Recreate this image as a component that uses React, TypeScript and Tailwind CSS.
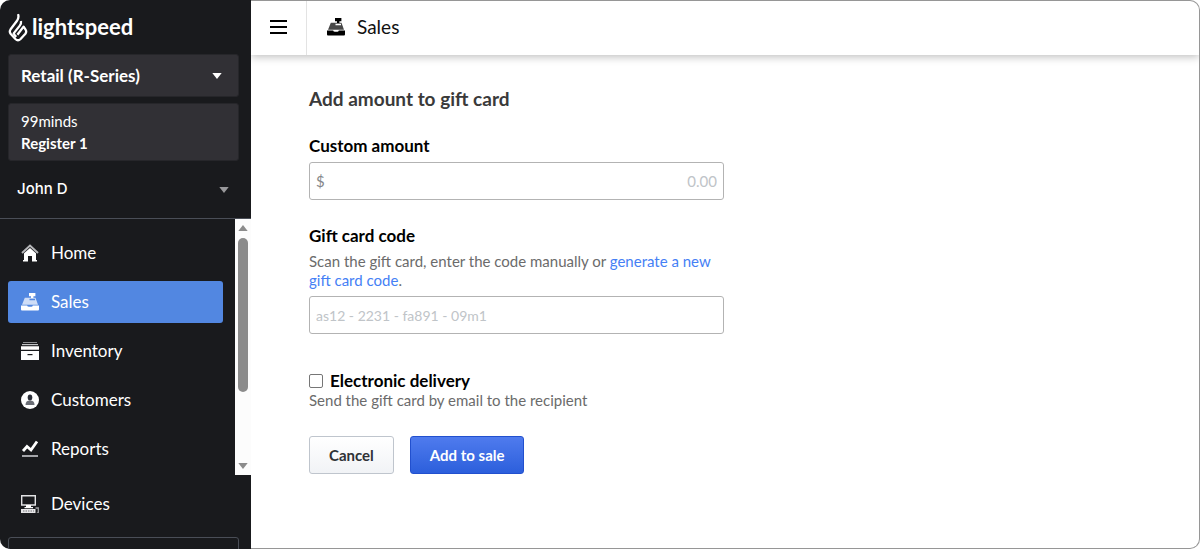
import type { ReactNode } from "react";

type IconProps = { className?: string };

function HomeIcon() {
  return (
    <svg className="size-[18px]" viewBox="0 0 18 18" fill="none" aria-hidden="true">
      <path d="M1 9 9 1.600 17 9" stroke="#b5b6b9" strokeWidth="2" />
      <path d="M3 9.300 9 3.900l6 5.400V16h1v1.500h-5V12H7v5.500H2V16h1z" fill="#fff" />
    </svg>
  );
}

function RegisterIcon({ className }: IconProps) {
  return (
    <svg className={className} viewBox="0 0 18 18" fill="currentColor" aria-hidden="true">
      <path d="M8 0h6.400v3.200h-2V5H10V3.200H8z" />
      <path
        fillRule="evenodd"
        d="M3.800 4.800h10.700l2.500 6.900H1zM8.500 5.800v1.400H14V5.800z"
        opacity="0.72"
      />
      <path d="M0 12.600h6.200c.2.8.8 1.200 1.400 1.200h2.800c.7 0 1.200-.4 1.400-1.200H18v3.600c0 .8-.5 1.300-1.300 1.300H1.300C.5 17.500 0 17 0 16.200z" />
    </svg>
  );
}

function InventoryIcon() {
  return (
    <svg className="size-[18px]" viewBox="0 0 18 18" aria-hidden="true">
      <path d="M2 0h14v1H2z" fill="#8f9093" />
      <path d="M1 2h16v1.200H1z" fill="#c5c6c8" />
      <path d="M0 4.200h18v3.600H0zM0 9h18v9H0z" fill="#fff" />
      <path d="M6.500 12h5v1.200h-5z" fill="#191a1d" />
    </svg>
  );
}

function CustomersIcon() {
  return (
    <svg className="size-[18px]" viewBox="0 0 18 18" aria-hidden="true">
      <circle cx="9" cy="9" r="9" fill="#fff" />
      <path d="M4.500 14c0-3.200 1.500-4.500 4.500-4.500s4.500 1.300 4.500 4.500z" fill="#6a6d75" />
      <ellipse cx="9" cy="6.500" rx="2.300" ry="3" fill="#2b2e38" />
    </svg>
  );
}

function ReportsIcon() {
  return (
    <svg className="size-[18px]" viewBox="0 0 18 18" fill="none" aria-hidden="true">
      <path d="m2 11 4-4.500 4 3.500 6-8.500" stroke="#fff" strokeWidth="2.800" />
      <path d="M1 16h16" stroke="#b5b6b9" strokeWidth="1.800" />
    </svg>
  );
}

function DevicesIcon() {
  return (
    <svg className="size-[18px]" viewBox="0 0 18 18" fill="none" aria-hidden="true">
      <path d="M.7.700h13.600v9.300H.700z" stroke="#e2e2e4" strokeWidth="1.400" />
      <path d="M5 10h5v2h2v1.200H3.500V12H5z" fill="#fff" />
      <path d="M0 14h14.500v4H0z" fill="#e6e6e8" />
      <path d="M2 16h11" stroke="#55565a" strokeWidth=".8" strokeDasharray="1.500 1" />
      <path d="M14.500 13h2.800v5h-1.500" stroke="#9b9c9f" strokeWidth="1.300" />
    </svg>
  );
}

function FlameLogo() {
  return (
    <svg className="h-[29px] w-5" viewBox="0 0 20 29" fill="none" stroke="#fff" aria-hidden="true">
      <path
        d="M10 1.200c1 2.600.4 4.600-1 6.600L2.600 16.300q-1.600 2.300 0 4.500L7.400 26q2.600 2.500 5.200 0l4.800-5.200q1.600-2.200 0-4.500L15.600 13.600 9.400 21.800"
        strokeWidth="2.300"
        strokeLinejoin="round"
      />
      <path d="M13 8c.3 1.700-.1 3.200-1.200 4.600L5.700 20.400q.6 1.600 2.600 3.400" strokeWidth="2.300" strokeLinejoin="round" />
    </svg>
  );
}

function Caret({ className }: IconProps) {
  return (
    <svg className={className} viewBox="0 0 10 6" fill="currentColor" aria-hidden="true">
      <path d="M.3 0h9.400L5 6z" />
    </svg>
  );
}

const navItems: { label: string; icon: ReactNode; active?: boolean }[] = [
  { label: "Home", icon: <HomeIcon /> },
  { label: "Sales", icon: <RegisterIcon className="size-[18px]" />, active: true },
  { label: "Inventory", icon: <InventoryIcon /> },
  { label: "Customers", icon: <CustomersIcon /> },
  { label: "Reports", icon: <ReportsIcon /> },
];

function Sidebar() {
  return (
    <aside className="flex w-[251px] shrink-0 flex-col overflow-hidden rounded-l-[10px] bg-[#191a1d] text-white">
      <div className="flex flex-col px-2 pt-3">
        <a href="#" className="flex h-[30px] items-center gap-1">
          <FlameLogo />
          <span className="text-[22px] leading-7 font-bold">lightspeed</span>
        </a>
        <div className="mt-3 mr-1 flex flex-col gap-[6px]">
          <button className="flex h-[43px] items-center justify-between rounded-[3px] border border-[#26262a] bg-[#313035] pr-4 pl-3 text-[17px] font-bold">
            Retail (R-Series)
            <Caret className="h-[6px] w-[10px]" />
          </button>
          <div className="rounded-[3px] border border-[#26262a] bg-[#313035] px-3 py-[6px] text-[15px] leading-[22px]">
            <p>99minds</p>
            <p className="font-bold">Register 1</p>
          </div>
        </div>
        <button className="flex h-[57px] items-center justify-between pr-[14px] pl-[9px] font-['Inter','Lato',sans-serif] text-[15px] font-medium">
          John D
          <Caret className="h-[6px] w-[10px] text-[#98989b]" />
        </button>
      </div>

      <div className="flex shrink-0 border-t border-[#4a4e57]">
        <nav className="flex flex-1 flex-col gap-[7px] pt-[13px] pr-3 pb-[5px] pl-2">
          {navItems.map((item) => (
            <a
              key={item.label}
              href="#"
              className={
                item.active
                  ? "flex h-[42px] items-center gap-3 rounded-[3px] bg-[#5287e1] px-[13px] text-[17px]"
                  : "flex h-[42px] items-center gap-3 rounded-[3px] px-[13px] text-[17px]"
              }
            >
              {item.icon}
              {item.label}
            </a>
          ))}
        </nav>
        <div className="flex w-4 flex-col items-center bg-[#fcfcfc] py-[6px] text-[#8b8b8b]">
          <Caret className="h-[6px] w-[10px] rotate-180" />
          <div className="mt-[7px] h-[154px] w-[10px] rounded-full bg-[#8b8b8b]" />
          <Caret className="mt-auto h-[6px] w-[10px]" />
        </div>
      </div>

      <a href="#" className="mx-2 mt-2 flex h-[42px] shrink-0 items-center gap-3 px-[13px] text-[17px]">
        <DevicesIcon />
        Devices
      </a>
      <div className="mt-3 mr-3 ml-2 h-12 shrink-0 rounded-[3px] border border-[#4a4e57]" />
    </aside>
  );
}

function Header() {
  return (
    <header className="flex h-[54px] shrink-0 items-stretch shadow-[0_2px_8px_rgba(0,0,0,0.25)]">
      <button aria-label="Menu" className="flex w-14 items-center justify-center border-r border-[#e3e3e3] pb-[2px]">
        <svg className="h-[14px] w-[17px]" viewBox="0 0 17 14" stroke="#000" strokeWidth="2" aria-hidden="true">
          <path d="M0 1h17M0 7h17M0 13h17" />
        </svg>
      </button>
      <h1 className="flex items-center gap-3 pb-[2px] pl-5 text-[19px] text-[#111]">
        <RegisterIcon className="size-[18px] text-black" />
        Sales
      </h1>
    </header>
  );
}

function GiftCardForm() {
  return (
    <form className="flex max-w-[415px] flex-col">
      <h2 className="text-[19px] leading-6 font-bold text-[#3a3a3a]">Add amount to gift card</h2>

      <label htmlFor="amount" className="mt-[23px] text-[17px] leading-6 font-bold">
        Custom amount
      </label>
      <div className="mt-1 flex h-[38px] items-center rounded-[3px] border border-[#b3b3b3] px-[6px] text-[15px]">
        <span className="text-[#85878a]">$</span>
        <input
          id="amount"
          placeholder="0.00"
          className="min-w-0 flex-1 text-right outline-none placeholder:text-[#c0c4c8]"
        />
      </div>

      <label htmlFor="code" className="mt-6 text-[17px] leading-6 font-bold">
        Gift card code
      </label>
      <p className="mt-1 text-[15px] leading-[19px] text-[#6b6b6b]">
        Scan the gift card, enter the code manually or{" "}
        <a href="#" className="text-[#4580f5]">
          generate a new gift card code
        </a>
        .
      </p>
      <input
        id="code"
        placeholder="as12 - 2231 - fa891 - 09m1"
        className="mt-[6px] h-[38px] rounded-[3px] border border-[#b3b3b3] px-[6px] text-sm outline-none placeholder:text-[#c0c4c8]"
      />

      <div className="mt-9 flex items-center gap-[7px]">
        <input
          id="electronic"
          type="checkbox"
          className="size-[14px] appearance-none rounded-[2px] border border-[#767676] checked:bg-[#3266dd]"
        />
        <label htmlFor="electronic" className="text-[17px] leading-[22px] font-bold">
          Electronic delivery
        </label>
      </div>
      <p className="text-[15px] leading-4 text-[#6b6b6b]">Send the gift card by email to the recipient</p>

      <div className="mt-7 flex gap-4 text-[15px] font-bold">
        <button
          type="button"
          className="h-[38px] rounded-[3px] border border-[#bfc5cd] bg-linear-to-b from-white to-[#f1f3f6] px-[19px] text-[#2f3236]"
        >
          Cancel
        </button>
        <button
          type="button"
          className="h-[38px] rounded-[3px] border border-[#2250ce] bg-linear-to-b from-[#4f7bee] to-[#2c5fdc] px-[19px] text-white"
        >
          Add to sale
        </button>
      </div>
    </form>
  );
}

export default function App() {
  return (
    <div className="flex h-screen bg-white font-['Lato',sans-serif] text-black">
      <Sidebar />
      <div className="flex min-w-0 flex-1 flex-col overflow-hidden rounded-r-[10px] border-y border-r border-[#969696]">
        <Header />
        <main className="flex-1 px-[58px] pt-8">
          <GiftCardForm />
        </main>
      </div>
    </div>
  );
}
